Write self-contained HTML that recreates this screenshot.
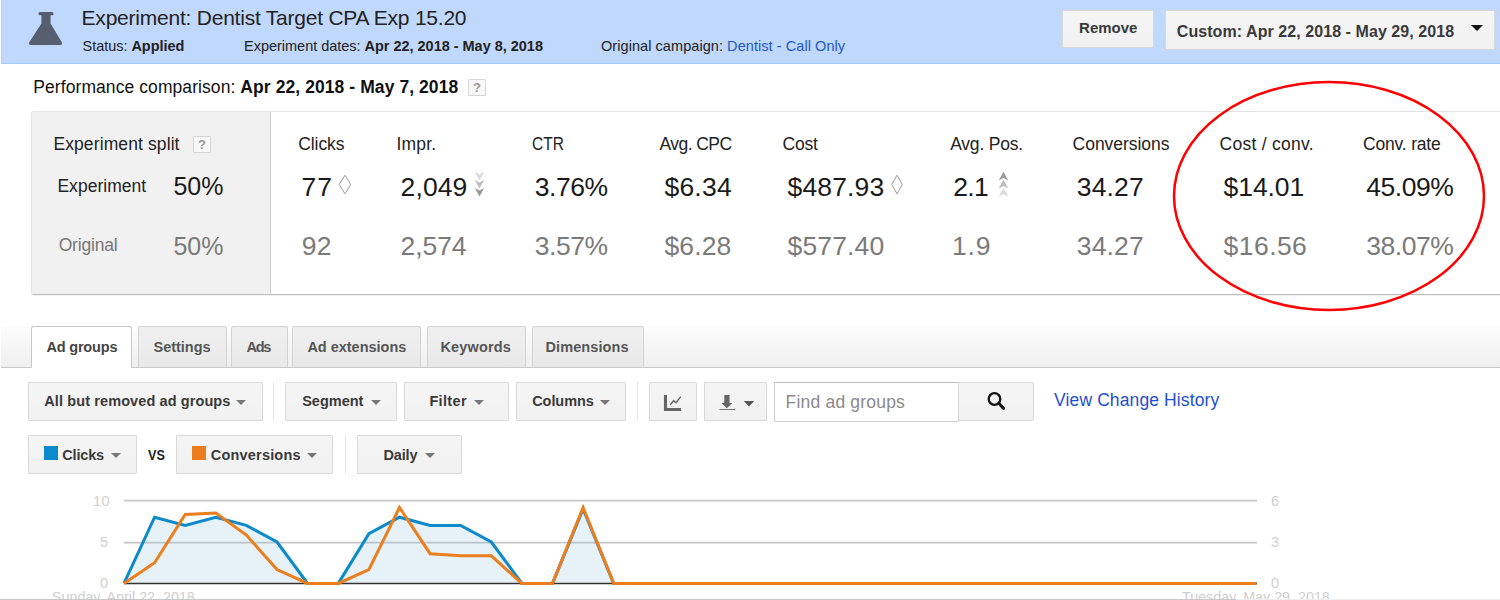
<!DOCTYPE html>
<html><head><meta charset="utf-8">
<style>
*{margin:0;padding:0;box-sizing:border-box}
html,body{width:1500px;height:600px;overflow:hidden;background:#fff;font-family:"Liberation Sans",sans-serif;color:#222}
.a{position:absolute}
.t{position:absolute;white-space:nowrap;line-height:1}
b{font-weight:bold}
#hdr{left:1px;top:0;width:1499px;height:64px;background:#c0d8fc;border-bottom:1px solid #a8c8f6;border-left:1px solid #b2cff8}
.btn{position:absolute;background:linear-gradient(#f5f5f5,#f1f1f1);border:1px solid #d9d9d9;border-radius:1px}
.bt{font-weight:bold;color:#3a3a3a;font-size:14.5px}
.arr{position:absolute;width:0;height:0;border-left:5px solid transparent;border-right:5px solid transparent;border-top:5px solid #777}
.help{position:absolute;width:18px;height:17px;border:1px solid #d6d6d6;background:#f8f8f8;border-radius:1px;color:#9a9a9a;font-size:13px;font-weight:bold;text-align:center;line-height:16px}
.lab{font-size:17.5px;color:#222}
.val{font-size:26.5px;color:#1a1a1a}
.org{font-size:26.5px;color:#7a7a7a}
.tab{position:absolute;top:326px;height:41px;background:linear-gradient(#f0f0f0,#e9e9e9);border:1px solid #d2d2d2;border-bottom:none;border-radius:3px 3px 0 0}
.tabt{font-size:14.5px;font-weight:bold;color:#555}
.sep{position:absolute;width:1px;background:#e6e6e6}
</style></head><body>

<!-- header -->
<div id="hdr" class="a"></div>
<svg class="a" style="left:26px;top:9px" width="40" height="40" viewBox="0 0 40 40">
  <path d="M14 3 H26 Q27.6 3 27.6 4.7 Q27.6 6.3 26 6.3 H24.6 V14.5 L35.6 33 Q37 36 34 36 H5 Q2 36 3.4 33 L15.4 14.5 V6.3 H14 Q12.4 6.3 12.4 4.7 Q12.4 3 14 3 Z" fill="#555f6f"/>
</svg>
<div id="t_title" class="t" style="left:81.6px;top:7px;font-size:21px;color:#222;letter-spacing:-0.226px">Experiment: Dentist Target CPA Exp 15.20</div>
<div id="t_status" class="t" style="left:82.6px;top:38.6px;font-size:14.5px;color:#222;letter-spacing:-0.043px">Status: <b>Applied</b></div>
<div id="t_expdates" class="t" style="left:244.1px;top:38.6px;font-size:14.5px;color:#222;letter-spacing:-0.023px">Experiment dates: <b>Apr 22, 2018 - May 8, 2018</b></div>
<div id="t_origcamp" class="t" style="left:601px;top:38.6px;font-size:14.5px;color:#222;letter-spacing:0.062px">Original campaign: <span style="color:#1f57c9">Dentist - Call Only</span></div>

<div class="btn" style="left:1062px;top:10px;width:92px;height:38px"></div>
<div id="t_remove" class="t bt" style="left:1079.1px;top:19.9px;font-size:15px;letter-spacing:-0.02px">Remove</div>
<div class="btn" style="left:1165px;top:10px;width:330px;height:40px"></div>
<div id="t_custom" class="t bt" style="left:1176.8px;top:23.8px;font-size:16px;letter-spacing:0.065px">Custom: Apr 22, 2018 - May 29, 2018</div>
<div class="a" style="left:1471px;top:25px;width:0;height:0;border-left:6px solid transparent;border-right:6px solid transparent;border-top:6px solid #111"></div>

<!-- performance comparison -->
<div id="t_perf" class="t" style="left:33.3px;top:78.5px;font-size:17.5px;color:#111;letter-spacing:0.076px">Performance comparison: <b>Apr 22, 2018 - May 7, 2018</b></div>
<div class="help" style="left:468px;top:79px">?</div>

<!-- stats box -->
<div class="a" style="left:31px;top:111px;width:1480px;height:184px;background:#fff;border:1px solid #e3e3e3;border-bottom:1px solid #bdbdbd;border-radius:3px;box-shadow:0 1px 1px rgba(0,0,0,.06)"></div>
<div class="a" style="left:32px;top:112px;width:238px;height:182px;background:#f1f1f1;border-radius:2px 0 0 2px"></div>
<div class="a" style="left:270px;top:112px;width:1px;height:182px;background:#cfcfcf"></div>

<div id="t_expsplit" class="t lab" style="left:53.4px;top:136px;letter-spacing:0.107px">Experiment split</div>
<div class="help" style="left:193px;top:136px">?</div>
<div id="t_experiment" class="t lab" style="left:57.4px;top:177.7px;letter-spacing:0.033px">Experiment</div>
<div id="t_50a" class="t val" style="left:173.4px;top:174.4px;font-size:25px">50%</div>
<div id="t_original" class="t lab" style="left:58.7px;top:237px;color:#777;letter-spacing:-0.2px">Original</div>
<div id="t_50b" class="t org" style="left:173.4px;top:234px;font-size:25px">50%</div>

<div id="t_clicks" class="t lab" style="left:298.2px;top:136px;letter-spacing:-0.06px">Clicks</div>
<div id="t_impr" class="t lab" style="left:396.4px;top:136px;letter-spacing:0.2px">Impr.</div>
<div id="t_ctr" class="t lab" style="left:532.1px;top:136px;transform:scaleX(0.885);transform-origin:0 0">CTR</div>
<div id="t_avgcpc" class="t lab" style="left:659.5px;top:136px;letter-spacing:-0.557px">Avg. CPC</div>
<div id="t_cost" class="t lab" style="left:782.6px;top:136px;letter-spacing:-0.233px">Cost</div>
<div id="t_avgpos" class="t lab" style="left:950.2px;top:136px;letter-spacing:-0.213px">Avg. Pos.</div>
<div id="t_conversions" class="t lab" style="left:1072.6px;top:136px;letter-spacing:-0.04px">Conversions</div>
<div id="t_costconv" class="t lab" style="left:1219.6px;top:136px;letter-spacing:0.273px">Cost / conv.</div>
<div id="t_convrate" class="t lab" style="left:1363px;top:136px;letter-spacing:-0.189px">Conv. rate</div>

<div id="t_77" class="t val" style="left:301.4px;top:173.5px;letter-spacing:1.2px">77</div>
<div id="t_2049" class="t val" style="left:400.6px;top:173.5px;letter-spacing:0.1px">2,049</div>
<div id="t_376" class="t val" style="left:534.8px;top:173.5px;letter-spacing:-0.45px">3.76%</div>
<div id="t_634" class="t val" style="left:664.4px;top:173.5px;letter-spacing:0.25px">$6.34</div>
<div id="t_48793" class="t val" style="left:787.6px;top:173.5px;letter-spacing:0.133px">$487.93</div>
<div id="t_21" class="t val" style="left:953.2px;top:173.5px;letter-spacing:-0.6px">2.1</div>
<div id="t_3427" class="t val" style="left:1076.8px;top:173.5px;letter-spacing:0.15px">34.27</div>
<div id="t_1401" class="t val" style="left:1223.6px;top:173.5px;letter-spacing:-0.08px">$14.01</div>
<div id="t_4509" class="t val" style="left:1366.2px;top:173.5px;letter-spacing:-0.44px">45.09%</div>

<div id="t_92" class="t org" style="left:301.8px;top:232.5px;letter-spacing:0.2px">92</div>
<div id="t_2574" class="t org" style="left:400.6px;top:232.5px;letter-spacing:-0.1px">2,574</div>
<div id="t_357" class="t org" style="left:534.8px;top:232.5px;letter-spacing:-0.45px">3.57%</div>
<div id="t_628" class="t org" style="left:664.4px;top:232.5px;letter-spacing:0.15px">$6.28</div>
<div id="t_57740" class="t org" style="left:787.6px;top:232.5px;letter-spacing:0.133px">$577.40</div>
<div id="t_19" class="t org" style="left:952px;top:232.5px;letter-spacing:0.8px">1.9</div>
<div id="t_3427b" class="t org" style="left:1076.8px;top:232.5px;letter-spacing:0.15px">34.27</div>
<div id="t_1656" class="t org" style="left:1223.6px;top:232.5px;letter-spacing:0.44px">$16.56</div>
<div id="t_3807" class="t org" style="left:1366.2px;top:232.5px;letter-spacing:-0.44px">38.07%</div>

<!-- diamonds & chevrons -->
<svg class="a" style="left:338px;top:174px" width="14" height="21"><path d="M7 1.2 L12.8 10.5 L7 19.8 L1.2 10.5 Z" fill="none" stroke="#9a9a9a" stroke-width="1"/></svg>
<svg class="a" style="left:891px;top:174px" width="14" height="21"><path d="M6 1.2 L11.3 10.5 L6 19.8 L0.7 10.5 Z" fill="none" stroke="#9a9a9a" stroke-width="1"/></svg>
<svg class="a" style="left:474px;top:171px" width="12" height="27">
  <path d="M0.7 0.7 L5.5 3.3 L10.3 0.7 L5.5 9.4 Z" fill="#d9d9d9"/>
  <path d="M0.7 8.8 L5.5 11.4 L10.3 8.8 L5.5 17.5 Z" fill="#bcbcbc"/>
  <path d="M0.7 16.9 L5.5 19.5 L10.3 16.9 L5.5 25.6 Z" fill="#9a9a9a"/>
</svg>
<svg class="a" style="left:998px;top:171px" width="12" height="27">
  <path d="M5.5 0.7 L10.3 9.4 L5.5 6.8 L0.7 9.4 Z" fill="#9a9a9a"/>
  <path d="M5.5 8.8 L10.3 17.5 L5.5 14.9 L0.7 17.5 Z" fill="#bcbcbc"/>
  <path d="M5.5 16.9 L10.3 25.6 L5.5 23.0 L0.7 25.6 Z" fill="#d9d9d9"/>
</svg>


<!-- tabs -->
<div class="a" style="left:1px;top:326px;width:1499px;height:41px;background:linear-gradient(#fdfdfd,#efefef)"></div>
<div class="a" style="left:1px;top:367px;width:1499px;height:1px;background:#c9c9c9"></div>
<div class="tab" style="left:31px;width:101px;background:#fff;border-color:#c8c8c8;height:42px"></div>
<div id="t_tab_adgroups" class="t tabt" style="left:46.4px;top:340px;color:#444;letter-spacing:-0.175px">Ad groups</div>
<div class="tab" style="left:138px;width:89px"></div>
<div id="t_tab_settings" class="t tabt" style="left:153.6px;top:340px;letter-spacing:-0.029px">Settings</div>
<div class="tab" style="left:231px;width:57px"></div>
<div id="t_tab_ads" class="t tabt" style="left:246.4px;top:340px;letter-spacing:-1.2px">Ads</div>
<div class="tab" style="left:292px;width:129px"></div>
<div id="t_tab_adext" class="t tabt" style="left:307.4px;top:340px;letter-spacing:-0.017px">Ad extensions</div>
<div class="tab" style="left:427px;width:99px"></div>
<div id="t_tab_keywords" class="t tabt" style="left:440.4px;top:340px;letter-spacing:0.171px">Keywords</div>
<div class="tab" style="left:532px;width:112px"></div>
<div id="t_tab_dimensions" class="t tabt" style="left:545.5px;top:340px;letter-spacing:0.1px">Dimensions</div>

<!-- toolbar -->
<div class="btn" style="left:28px;top:382px;width:235px;height:39px"></div>
<div id="t_allbut" class="t bt" style="left:44.3px;top:394.2px;letter-spacing:0.1px">All but removed ad groups</div>
<div class="arr" style="left:236px;top:400px"></div>
<div class="sep" style="left:273px;top:382px;height:39px"></div>
<div class="btn" style="left:285px;top:382px;width:112px;height:39px"></div>
<div id="t_segment" class="t bt" style="left:302.2px;top:394.2px">Segment</div>
<div class="arr" style="left:371px;top:400px"></div>
<div class="btn" style="left:404px;top:382px;width:105px;height:39px"></div>
<div id="t_filter" class="t bt" style="left:429.4px;top:394.2px;letter-spacing:0.34px">Filter</div>
<div class="arr" style="left:474px;top:400px"></div>
<div class="btn" style="left:516px;top:382px;width:110px;height:39px"></div>
<div id="t_columns" class="t bt" style="left:532.2px;top:394.2px;letter-spacing:-0.067px">Columns</div>
<div class="arr" style="left:600px;top:400px"></div>
<div class="sep" style="left:637px;top:382px;height:39px"></div>
<div class="btn" style="left:649px;top:382px;width:48px;height:39px"></div>
<svg class="a" style="left:660px;top:392px" width="26" height="22">
  <path d="M5.5 2.9 V17.5 H21" fill="none" stroke="#666" stroke-width="3.1" stroke-linecap="butt"/>
  <path d="M10.3 12.9 L13.6 8.6 L16 10.6 L20.8 4.6" fill="none" stroke="#6a6a6a" stroke-width="1.5"/>
</svg>
<div class="btn" style="left:704px;top:382px;width:63px;height:39px"></div>
<svg class="a" style="left:718px;top:392px" width="40" height="22">
  <path d="M6.3 2.9 H11.5 V11 H14.2 L8.9 16.3 L3.6 11 H6.3 Z" fill="#666"/>
  <path d="M1.5 17.5 H17" stroke="#777" stroke-width="1"/>
  <path d="M25.8 9 H36.2 L31 14.6 Z" fill="#555"/>
</svg>
<div class="a" style="left:774px;top:382px;width:185px;height:40px;background:#fff;border:1px solid #cfcfcf;border-top-color:#bdbdbd"></div>
<div id="t_find" class="t" style="left:785.6px;top:394.3px;font-size:17.5px;color:#8a8a8a;letter-spacing:0.192px">Find ad groups</div>
<div class="btn" style="left:958px;top:382px;width:76px;height:39px;border-radius:0 2px 2px 0"></div>
<svg class="a" style="left:984px;top:389px" width="24" height="24">
  <circle cx="10.5" cy="10" r="5.8" fill="none" stroke="#111" stroke-width="2.3"/>
  <path d="M15.2 14.8 L19.6 19.4" stroke="#111" stroke-width="3" stroke-linecap="round"/>
</svg>
<div id="t_vch" class="t" style="left:1054.1px;top:391.9px;font-size:17.5px;color:#1f4fcf;letter-spacing:0.111px">View Change History</div>

<!-- chart controls -->
<div class="btn" style="left:28px;top:435px;width:109px;height:39px"></div>
<div class="a" style="left:44px;top:446px;width:14px;height:14px;background:#0b8bcc"></div>
<div id="t_clicks2" class="t bt" style="left:62.3px;top:448.2px;letter-spacing:-0.18px">Clicks</div>
<div class="arr" style="left:111px;top:453px"></div>
<div id="t_vs" class="t" style="left:147.7px;top:448px;font-size:14px;font-weight:bold;color:#222;transform:scaleX(0.9);transform-origin:0 0">VS</div>
<div class="btn" style="left:176px;top:435px;width:157px;height:39px"></div>
<div class="a" style="left:192px;top:446px;width:14px;height:14px;background:#ec7d1f"></div>
<div id="t_conversions2" class="t bt" style="left:210.8px;top:448.2px;letter-spacing:0.19px">Conversions</div>
<div class="arr" style="left:307px;top:453px"></div>
<div class="sep" style="left:345px;top:435px;height:39px"></div>
<div class="btn" style="left:357px;top:435px;width:105px;height:39px"></div>
<div id="t_daily" class="t bt" style="left:383.4px;top:448.2px;letter-spacing:-0.125px">Daily</div>
<div class="arr" style="left:425px;top:453px"></div>

<!-- chart -->
<svg class="a" style="left:0;top:480px" width="1500" height="120" viewBox="0 480 1500 120">
  <path d="M124 500.6 H1257 M124 542.6 H1257" stroke="#c6c6c6" stroke-width="1.6"/>
  <path d="M124.0,583.4 L124.0,583.4 154.6,517.2 185.2,525.4 215.8,517.2 246.4,525.4 277.0,542.0 307.6,583.4 338.3,583.4 368.9,533.7 399.5,517.2 430.1,525.4 460.7,525.4 491.3,542.0 521.9,583.4 552.5,583.4 583.1,508.9 613.7,583.4 644.3,583.4 674.9,583.4 705.6,583.4 736.2,583.4 766.8,583.4 797.4,583.4 828.0,583.4 858.6,583.4 889.2,583.4 919.8,583.4 950.4,583.4 981.0,583.4 1011.6,583.4 1042.2,583.4 1072.9,583.4 1103.5,583.4 1134.1,583.4 1164.7,583.4 1195.3,583.4 1225.9,583.4 1256.5,583.4 L1256.5,583.4 Z" fill="rgba(140,190,225,0.22)"/>
  <path d="M124 583.5 H1257" stroke="#333" stroke-width="1.6"/>
  <polyline points="124.0,583.4 154.6,517.2 185.2,525.4 215.8,517.2 246.4,525.4 277.0,542.0 307.6,583.4 338.3,583.4 368.9,533.7 399.5,517.2 430.1,525.4 460.7,525.4 491.3,542.0 521.9,583.4 552.5,583.4 583.1,508.9 613.7,583.4 644.3,583.4 674.9,583.4 705.6,583.4 736.2,583.4 766.8,583.4 797.4,583.4 828.0,583.4 858.6,583.4 889.2,583.4 919.8,583.4 950.4,583.4 981.0,583.4 1011.6,583.4 1042.2,583.4 1072.9,583.4 1103.5,583.4 1134.1,583.4 1164.7,583.4 1195.3,583.4 1225.9,583.4 1256.5,583.4" fill="none" stroke="#0c8ac9" stroke-width="3" stroke-linejoin="miter"/>
  <polyline points="124.0,583.4 154.6,562.7 185.2,514.4 215.8,513.0 246.4,535.1 277.0,569.6 307.6,583.4 338.3,583.4 368.9,569.6 399.5,507.5 430.1,553.7 460.7,555.8 491.3,555.8 521.9,583.4 552.5,583.4 583.1,507.5 613.7,583.4 644.3,583.4 674.9,583.4 705.6,583.4 736.2,583.4 766.8,583.4 797.4,583.4 828.0,583.4 858.6,583.4 889.2,583.4 919.8,583.4 950.4,583.4 981.0,583.4 1011.6,583.4 1042.2,583.4 1072.9,583.4 1103.5,583.4 1134.1,583.4 1164.7,583.4 1195.3,583.4 1225.9,583.4 1256.5,583.4" fill="none" stroke="#ec7e1e" stroke-width="3" stroke-linejoin="miter"/>
</svg>
<div id="t_l10" class="t" style="left:93px;top:494px;font-size:14.5px;color:#d0d0d0;letter-spacing:0.5px">10</div>
<div id="t_l5" class="t" style="left:100px;top:535px;font-size:14.5px;color:#d0d0d0">5</div>
<div id="t_l0" class="t" style="left:100px;top:576px;font-size:14.5px;color:#d0d0d0">0</div>
<div id="t_r6" class="t" style="left:1271px;top:493.6px;font-size:14.5px;color:#d0d0d0">6</div>
<div id="t_r3" class="t" style="left:1271px;top:535px;font-size:14.5px;color:#d0d0d0">3</div>
<div id="t_r0" class="t" style="left:1271px;top:576px;font-size:14.5px;color:#d0d0d0">0</div>
<div id="t_sunday" class="t" style="left:52px;top:590px;font-size:14.3px;color:#cfcfcf">Sunday, April 22, 2018</div>
<div id="t_tuesday" class="t" style="left:1182px;top:590px;font-size:14.3px;color:#cfcfcf">Tuesday, May 29, 2018</div>
<div class="a" style="left:0;top:599px;width:1236px;height:1px;background:#c8c8c8"></div>
<div class="a" style="left:1236px;top:599px;width:264px;height:1px;background:#eeeeee"></div>

<!-- red ellipse -->
<svg class="a" style="left:0;top:0" width="1500" height="600"><ellipse cx="1329" cy="196" rx="155" ry="114" fill="none" stroke="#ff0000" stroke-width="2.5"/></svg>

</body></html>
